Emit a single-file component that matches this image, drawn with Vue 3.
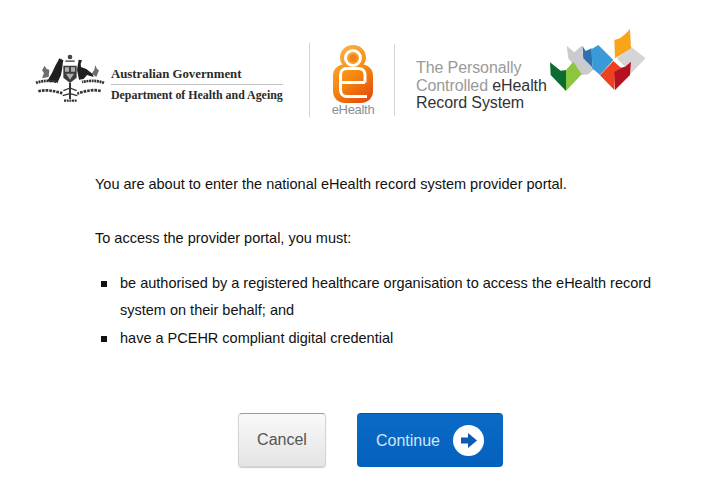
<script setup>
const bullets = [
  'be authorised by a registered healthcare organisation to access the eHealth record system on their behalf; and',
  'have a PCEHR compliant digital credential',
]
</script>

<template>
  <div class="page">
    <header class="logos">
      <svg class="arms" width="70" height="52" viewBox="45 70 210 156">
        <circle cx="150" cy="82" r="7" fill="#444" />
        <path d="M136 92h28v5h-28z" fill="#666" />
        <path d="M118 86l12 6-2 10-1 12-4 22-10 22-12-2-10 2-9-4 14-24 10-22 8-14z" fill="#1f1f1f" />
        <path d="M176 90l10 2-4 10 1 10 16 6 18 14 4 10-20-6-10 12-14 2-6-30z" fill="#1f1f1f" />
        <path d="M130 108h40v36l-20 16-20-16z" fill="#3d3d3d" />
        <path d="M135 113h12v13h-12zM153 113h12v13h-12zM138 132h24l-12 18z" fill="#b0b0b0" />
        <path d="M74 108l6 10 8 2-2 22-20 4 6-16-6-8z" fill="#6e6e6e" />
        <path d="M226 106l5 12 6 4-8 20-14-10 8-12z" fill="#6e6e6e" />
        <g fill="none" stroke="#333">
          <path d="M48 160c20-8 42-8 66-3" stroke-width="8" stroke-dasharray="6 2" />
          <path d="M252 160c-20-8-42-8-66-3" stroke-width="8" stroke-dasharray="6 2" />
          <path d="M55 185c22-6 46-2 72 6" stroke-width="8" stroke-dasharray="8 3" />
          <path d="M242 184c-22-6-46 0-70 8" stroke-width="8" stroke-dasharray="8 3" />
          <path d="M150 160v48" stroke-width="6" />
          <path d="M150 175l-20 8M150 175l20 8M150 192l-22 6M150 192l22 6" stroke-width="4" />
          <path d="M132 213h38" stroke-width="7" stroke-dasharray="6 2" />
        </g>
      </svg>
      <div class="gov">
        <div class="gov-top">Australian Government</div>
        <div class="gov-bottom">Department of Health and Ageing</div>
      </div>
      <div class="rule rule-a"></div>
      <div class="eh">
        <svg class="soft" width="40" height="58" viewBox="0 0 40 58">
          <defs>
            <linearGradient id="ehg" x1="0.2" y1="0" x2="0.7" y2="1">
              <stop offset="0" stop-color="#fbb347" />
              <stop offset="0.55" stop-color="#f5890f" />
              <stop offset="1" stop-color="#e74f0e" />
            </linearGradient>
          </defs>
          <path d="M20 0c7.500 0 13 5.500 13 12.500 0 3-1 5-2.500 7 5.500 1 9.500 5.500 9.500 11V46c0 7-5 12-12 12H12C5 58 0 53 0 46V30.500c0-5.500 4-10 9.500-11-1.500-2-2.500-4-2.500-7C7 5.500 12.500 0 20 0z" fill="url(#ehg)" />
          <circle cx="20" cy="13" r="7.500" fill="none" stroke="#fff" stroke-width="3" />
          <circle cx="20" cy="13" r="3.500" fill="#f0801a" />
          <path d="M32 37.500V30c0-4-2.500-6.500-6.500-6.500H14c-4 0-6.500 2.500-6.500 6.500v15c0 4 2.500 6.500 6.500 6.500h20" fill="none" stroke="#fff" stroke-width="3" />
          <path d="M8 37.500h24" fill="none" stroke="#fff" stroke-width="3" />
        </svg>
        <div class="eh-label">eHealth</div>
      </div>
      <div class="rule rule-b"></div>
      <div class="pc">
        <div>The Personally</div>
        <div>Controlled <span class="dark">eHealth</span></div>
        <div class="dark">Record System</div>
      </div>
      <svg class="mosaic soft" width="105" height="70" viewBox="0 0 315 210">
        <path d="M65 62l23 20 22-20 2 23 38 45-20 18-22 2-38-50z" fill="#c9cbce" />
        <path d="M258 65l44 35-47 48 3-38-18 15-25-25z" fill="#d3d5d7" />
        <path d="M15 112l32 25 18-2-2 63-46-48z" fill="#0b6b30" />
        <path d="M63 135l22-25 25 38-47 50z" fill="#8cc63f" />
        <path d="M112 62l10 16 18-8 2 60 23 20-50-50z" fill="#2f6fab" />
        <path d="M140 72l20-12 45 45-40 45-23-22z" fill="#3a9ad9" />
        <path d="M255 12l3 58-48 30-2-55 17-5 15-12z" fill="#f9a51a" />
        <path d="M165 151l40-43 23 20-18 12-2 55z" fill="#ee4023" />
        <path d="M208 140l20-12 12-3 18-15-3 40-45 45z" fill="#b5121f" />
      </svg>
    </header>

    <main class="body">
      <p class="intro">You are about to enter the national eHealth record system provider portal.</p>
      <p class="intro second">To access the provider portal, you must:</p>
      <ul class="list">
        <li v-for="b in bullets" :key="b">{{ b }}</li>
      </ul>
    </main>

    <div class="actions">
      <button class="btn cancel" type="button">Cancel</button>
      <button class="btn go" type="button">
        <span>Continue</span>
        <svg width="31" height="31" viewBox="0 0 31 31">
          <circle cx="15.500" cy="15.500" r="15.500" fill="#fff" />
          <path d="M8 12.500h7V8l9 7.500-9 7.500v-4.500H8z" fill="#0a5cb0" />
        </svg>
      </button>
    </div>
  </div>
</template>

<style scoped>
.page {
  width: 703px;
  height: 486px;
  background: #fff;
  overflow: hidden;
  font-family: "Liberation Sans", Arial, sans-serif;
  color: #111;
}
.logos {
  display: flex;
  align-items: flex-start;
  height: 125px;
  padding: 28px 0 0 35px;
  box-sizing: border-box;
}
.arms {
  flex: none;
  margin: 25px 6px 0 0;
  filter: blur(0.6px);
}
.soft {
  filter: blur(0.5px);
}
.gov {
  width: 172px;
  margin-top: 39px;
  font-family: "Liberation Serif", "Times New Roman", serif;
  font-weight: 700;
  color: #2a2a2a;
  white-space: nowrap;
}
.gov-top {
  font-size: 12.800px;
  line-height: 14px;
  padding-bottom: 3px;
  border-bottom: 1px solid #c4c4c4;
}
.gov-bottom {
  font-size: 11.900px;
  line-height: 14px;
  padding-top: 3px;
}
.rule {
  flex: none;
  width: 1px;
  background: #d6d6d6;
}
.rule-a {
  height: 74px;
  margin: 15px 0 0 26px;
}
.rule-b {
  height: 72px;
  margin: 16px 0 0 0;
}
.eh {
  width: 84px;
  box-sizing: border-box;
  padding-left: 2px;
  margin-top: 17px;
  display: flex;
  flex-direction: column;
  align-items: center;
}
.eh-label {
  font-size: 13px;
  line-height: 12px;
  margin-top: 1px;
  color: #8a8f94;
  letter-spacing: -0.300px;
}
.pc {
  width: 129px;
  flex: none;
  margin: 31px 0 0 21px;
  font-size: 16px;
  line-height: 17.500px;
  color: #9a9a9a;
  letter-spacing: -0.100px;
  white-space: nowrap;
}
.dark {
  color: #333;
}
.mosaic {
  margin-top: -3px;
  flex: none;
}
.body {
  width: 570px;
  margin-left: 95px;
  font-size: 14.500px;
  line-height: 27px;
  color: #111;
}
.intro {
  margin: 0;
  padding-top: 46px;
}
.intro.second {
  padding-top: 27px;
}
.list {
  list-style: none;
  margin: 18px 0 0;
  padding: 0 0 0 25px;
}
.list li {
  position: relative;
}
.list li + li {
  margin-top: 1px;
}
.list li::before {
  content: "";
  position: absolute;
  left: -19px;
  top: 11px;
  width: 6px;
  height: 6px;
  background: #111;
}
.actions {
  display: flex;
  justify-content: center;
  gap: 31px;
  margin-top: 61px;
  padding-left: 38px;
}
.btn {
  height: 54px;
  font-family: "Liberation Sans", Arial, sans-serif;
  font-size: 16px;
  border-radius: 4px;
  box-sizing: border-box;
  padding: 0;
  display: flex;
  align-items: center;
  justify-content: center;
}
.cancel {
  width: 88px;
  color: #555;
  background: linear-gradient(#f9f9f9, #e4e4e4);
  border: 1px solid #d4d4d4;
  border-top-color: #9a9a9a;
  box-shadow: 0 1px 1px #ccc;
}
.go {
  width: 146px;
  color: #cfe6fb;
  background: linear-gradient(#0a6bc6, #0460bd);
  border: none;
  border-top: 1px solid #0a4f96;
  gap: 13px;
}
</style>
